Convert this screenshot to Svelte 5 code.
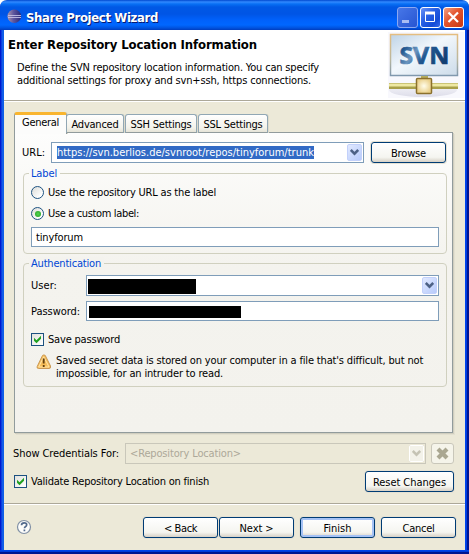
<script>
  let location = $state('https://svn.berlios.de/svnroot/repos/tinyforum/trunk');
  const tabs = [
    { name: 'Advanced', width: 47, box: 58 },
    { name: 'SSH Settings', width: 61, box: 72 },
    { name: 'SSL Settings', width: 59, box: 70 }
  ];

  // Tracks a label so that it occupies its designed width.
  function fit(node, width) {
    const natural = node.getBoundingClientRect().width;
    node.style.letterSpacing = (width - natural) / node.textContent.length + 'px';
  }
</script>

{#snippet t(text, width)}<span class="t" use:fit={width}>{text}</span>{/snippet}

{#snippet arrow(disabled)}
  <span class="drop" class:disabled>
    <svg width="9" height="7" viewBox="0 0 9 7"><path d="M.8 1 4.500 4.700 8.200 1" fill="none" stroke={disabled ? '#c5c3b4' : '#4d6185'} stroke-width="2.500" /></svg>
  </span>
{/snippet}

{#snippet check()}
  <span class="check"><svg width="11" height="11" viewBox="0 0 11 11"><path d="M2 3.800v3L4.500 9.200 9 4.800v-3L4.500 6.200Z" fill="#21a121" /></svg></span>
{/snippet}

<div class="window">
  <header class="titlebar">
    <svg class="eclipse" width="15" height="15" viewBox="0 0 15 15">
      <defs><linearGradient id="orb" x2="1" y2="0"><stop stop-color="#a995ae" /><stop offset=".45" stop-color="#5d559d" /><stop offset="1" stop-color="#292978" /></linearGradient></defs>
      <circle cx="7.300" cy="7.300" r="6.800" fill="url(#orb)" />
      <path d="M1 6.500h13M1 8.500h13" stroke="#c3c0e4" stroke-width=".9" />
    </svg>
    <h1>{@render t('Share Project Wizard', 132)}</h1>
    <div class="controls">
      <span class="ctl dim"><svg width="19" height="19"><path d="M4 13.500h7" stroke="#a9bdf3" stroke-width="3" /></svg></span>
      <span class="ctl"><svg width="19" height="19"><path d="M4.500 5.500h9v8h-9z" fill="none" stroke="#fff" /><path d="M4 5h10" stroke="#fff" stroke-width="3" /></svg></span>
      <span class="ctl close"><svg width="19" height="19"><path d="m4.500 4.500 9.500 9.500m0-9.500-9.500 9.500" stroke="#fff" stroke-width="2.200" /></svg></span>
    </div>
  </header>

  <section class="banner">
    <div class="intro">
      <h2>{@render t('Enter Repository Location Information', 249)}</h2>
      <p>{@render t('Define the SVN repository location information. You can specify', 302)}<br />{@render t('additional settings for proxy and svn+ssh, https connections.', 294)}</p>
    </div>
    <svg class="svn" width="76" height="66" viewBox="0 0 76 66">
      <defs>
        <linearGradient id="sheet" x2="1" y2="1"><stop stop-color="#bed3e6" /><stop offset=".45" stop-color="#f2f7fc" /><stop offset="1" stop-color="#ccdbe9" /></linearGradient>
        <linearGradient id="frame" x2="0" y2="1"><stop stop-color="#e4bd80" /><stop offset=".6" stop-color="#bbb79d" /><stop offset="1" stop-color="#8098ae" /></linearGradient>
        <linearGradient id="ink" x2="1" y2=".5"><stop stop-color="#164377" /><stop offset=".2" stop-color="#225790" /><stop offset=".42" stop-color="#6b95bf" /><stop offset=".62" stop-color="#225790" /><stop offset="1" stop-color="#123e71" /></linearGradient>
        <radialGradient id="hub"><stop stop-color="#fffdeb" /><stop offset="1" stop-color="#ead08a" /></radialGradient>
        <linearGradient id="shade" x2="0" y2="1"><stop stop-color="#f8f8fc" /><stop offset="1" stop-color="#dddde9" /></linearGradient>
      </defs>
      <path d="M0 0h76v66H0z" fill="#f8f8fd" />
      <ellipse cx="35" cy="58" rx="34" ry="7" fill="url(#shade)" />
      <path d="M2.500 2.500h67v41h-67z" fill="url(#sheet)" stroke="url(#frame)" stroke-width="1.500" />
      <text transform="translate(11.500 32) scale(1.030 1)" fill="url(#ink)" stroke="url(#ink)" stroke-width=".7">SVN</text>
      <path d="M33 44h7v7h-7z" fill="#b6ad5d" />
      <path d="M1 51h69v6H1z" fill="#a9a04a" /><path d="M1 51.500h69v3H1z" fill="#eee8a2" />
      <rect x="28.500" y="46.500" width="15" height="15" rx="1" fill="url(#hub)" stroke="#8b702c" stroke-width="1.500" />
    </svg>
  </section>

  <main>
    <nav>
      <span class="tab active">{@render t('General', 37)}</span>
      {#each tabs as tab}
        <span class="tab" style:width="{tab.box}px">{@render t(tab.name, tab.width)}</span>
      {/each}
    </nav>
    <div class="panel">
      <div class="row url">
        <label for="url">{@render t('URL:', 23)}</label>
        <div class="field combo" id="url"><mark>{@render t(location, 257)}</mark>{@render arrow(false)}</div>
        <button class="wide">{@render t('Browse', 35)}</button>
      </div>

      <section class="group naming">
        <h3>{@render t('Label', 26)}</h3>
        <div class="option"><i class="radio"></i>{@render t('Use the repository URL as the label', 168)}</div>
        <div class="option second"><i class="radio on"></i>{@render t('Use a custom label:', 91)}</div>
        <div class="field custom">{@render t('tinyforum', 47)}</div>
      </section>

      <section class="group auth">
        <h3>{@render t('Authentication', 70)}</h3>
        <div class="row user"><span class="caption">{@render t('User:', 26)}</span><div class="field combo"><b class="mask name"></b>{@render arrow(false)}</div></div>
        <div class="row pass"><span class="caption">{@render t('Password:', 49)}</span><div class="field"><b class="mask secret"></b></div></div>
        <div class="option save">{@render check()}{@render t('Save password', 72)}</div>
        <div class="note">
          <svg width="16" height="16" viewBox="0 0 16 16"><path d="M7.500 1Q9 .6 9.500 2l5 10q.7 2.500-1.500 2.500H2.500Q.5 14.500 1.200 12.500L6 2.500Q6.500 1 7.500 1Z" fill="#f7bd58" stroke="#c99855" /><path d="M7.700 2.800 13 13H2.700Z" fill="none" stroke="#ffe6ad" /><path d="M7.700 4.500v5M7.700 11v2" stroke="#65400f" stroke-width="1.800" /></svg>
          <p>{@render t("Saved secret data is stored on your computer in a file that's difficult, but not", 367)}<br />{@render t('impossible, for an intruder to read.', 167)}</p>
        </div>
      </section>
    </div>

    <div class="row credentials">
      <span class="caption">{@render t('Show Credentials For:', 106)}</span>
      <div class="field combo off">{@render t('<Repository Location>', 111)}{@render arrow(true)}</div>
      <button class="remove" disabled aria-label="Remove"><svg width="13" height="13" viewBox="0 0 13 13"><path d="m2 2 9 9m0-9-9 9" stroke="#aaa791" stroke-width="4.200" /></svg></button>
    </div>
    <div class="row validate">
      <div class="option">{@render check()}{@render t('Validate Repository Location on finish', 178)}</div>
      <button class="reset">{@render t('Reset Changes', 73)}</button>
    </div>
  </main>

  <footer>
    <svg class="help" width="16" height="16" viewBox="0 0 16 16"><circle cx="8" cy="8" r="6.500" fill="#fdfdfb" stroke="#8190a5" stroke-width="1.200" /><path d="M5.500 6.300q0-2.500 2.700-2.500 2.500 0 2.500 2 0 1.200-1.300 2-.9.600-.9 1.500M8.400 10.600v1.700" fill="none" stroke="#536b8d" stroke-width="1.700" /></svg>
    <button class="wide back">{@render t('< Back', 33)}</button>
    <button class="wide next">{@render t('Next >', 34)}</button>
    <button class="wide default">{@render t('Finish', 28)}</button>
    <button class="wide cancel">{@render t('Cancel', 32)}</button>
  </footer>
</div>

<style>
  :global(body) { margin: 0; background: #fff; overflow: hidden; }
  * { box-sizing: border-box; }
  h1, h2, h3, p { margin: 0; font: inherit; }
  svg { display: block; flex: none; }
  .window {
    width: 469px; height: 554px; display: flex; flex-direction: column;
    font: 11px/13px "DejaVu Sans Condensed", "DejaVu Sans", sans-serif; color: #000;
    background: linear-gradient(90deg, #0019cf 0, #0019cf 1px, #0831d9 1px, #166aee 3px, #0855dd 4px, #ece9d8 4px, #ece9d8 465px, #0048f1 465px, #003bda 467px, #001590 467px);
    border-radius: 7px 7px 0 0; overflow: hidden; white-space: nowrap;
  }
  .t { display: inline-block; white-space: pre; }
  .titlebar {
    height: 30px; flex: none; display: flex; align-items: center; padding: 0 5px 0 7px;
    background: linear-gradient(#0048cf 0, #3189ff 2px, #0870f4 4px, #0058e5 7px, #0055e5 14px, #0061fb 20px, #0067ff 25px, #0052de 28px, #003dbe 30px);
  }
  .eclipse { margin-top: 2px; }
  h1 { margin: 5px 0 0 4px; color: #fff; font: bold 13px/16px "DejaVu Sans Condensed", sans-serif; text-shadow: 1px 1px 0 #071a70; }
  .controls { display: flex; gap: 2px; margin: 4px 0 0 auto; }
  .ctl { width: 21px; height: 21px; border: 1px solid #fff; border-radius: 3px; background: linear-gradient(135deg, #6b93f6, #2860e5 40%, #134bd7 75%, #376bed); }
  .dim { border-color: #8ca8f2; background: linear-gradient(135deg, #4777e8, #2755d2); }
  .close { background: linear-gradient(135deg, #f1a184, #e3532d 45%, #c73811); }
  .banner { height: 72px; flex: none; margin: 0 4px; display: flex; justify-content: space-between; background: linear-gradient(#fff 70px, #aca899 70px, #aca899 71px, #fff 71px); padding: 2px 1px 0 4px; }
  h2 { margin-top: 5px; font: bold 13px/16px "DejaVu Sans Condensed", sans-serif; }
  .intro p { margin: 8px 0 0 9px; }
  .svn text { font: bold 24px "Open Sans", sans-serif; letter-spacing: 0; }

  main { flex: 1; padding: 10px 15px 0 14px; }
  main { padding-right: 11px; }
  nav { height: 21px; display: flex; align-items: flex-end; position: relative; }
  .tab { height: 19px; display: flex; justify-content: center; padding-top: 3px; margin-right: 1px; border: 1px solid #91a7b4; border-bottom-color: #919b9c; border-radius: 3px 3px 0 0; background: linear-gradient(#fff, #f3f2ea 75%, #e5e3d7); box-shadow: 1px 0 #dddacb; }
  .active { width: 53px; height: 22px; margin: 0 -1px -1px 0; padding-top: 1px; background: #fcfcfb; border: 1px solid #919b9c; border-top: 3px solid #f9b52f; border-bottom: 0; }
  .panel { width: 439px; height: 301px; margin-top: -1px; padding: 9px 6px 0 8px; border: 1px solid #919b9c; background: linear-gradient(#fdfdfc, #f4f3ee 45%, #f3f2ed); box-shadow: 1px 1px #d0cebf, 2px 2px #e3e0d0; }
  .row { display: flex; align-items: center; }
  .url { height: 21px; }
  .url label { width: 28px; margin-left: -1px; }
  .url .combo { width: 314px; margin-left: 1px; padding-left: 5px; }
  mark { height: 13px; background: #316ac5; color: #fff; line-height: 13px; margin-top: -1px; }
  .url button { margin-left: 7px; }
  .field { border: 1px solid #7f9db9; background: #fff; display: flex; align-items: center; height: 20px; }
  .combo { height: 21px; padding-right: 1px; }
  .drop { width: 15px; height: 17px; margin-left: auto; display: flex; align-items: center; justify-content: center; border-radius: 2px; border: 1px solid #c3d1fb; background: linear-gradient(135deg, #e1e9ff, #b8cbfb); }
  .drop.disabled { border-color: #e8e6dc; outline: 1px solid #fff; outline-offset: -1px; background: #f3f2e9; }
  button { height: 21px; padding: 0 0 1px; border: 1px solid #003c74; border-radius: 3px; background: linear-gradient(#fff, #f5f5f0 75%, #d6d0c5); box-shadow: 0 0 0 1px #e5e1d3; font: inherit; color: #000; flex: none; display: flex; align-items: center; justify-content: center; }
  .wide { width: 75px; }
  .wide .t, .reset .t { margin-top: 2px; }
  .group { position: relative; width: 424px; border: 1px solid #d0d0bf; border-radius: 4px; }
  .group h3 { position: absolute; top: -7px; left: 5px; padding: 0 3px 0 2px; color: #0046d5; background: #fafaf8; }
  .auth h3 { background: #f4f3ee; }
  .naming { height: 81px; margin-top: 10px; padding: 12px 7px 0; }
  .option { height: 13px; display: flex; align-items: center; gap: 4px; }
  .second { margin-top: 8px; }
  .radio { width: 13px; height: 13px; border: 1px solid #1d5281; border-radius: 50%; background: linear-gradient(135deg, #dcdcd7, #fff 80%); display: flex; align-items: center; justify-content: center; }
  .on::after { content: ''; width: 6px; height: 6px; border-radius: 50%; background: radial-gradient(#54d551, #219b20); }
  .custom { width: 408px; margin-top: 7px; padding-left: 4px; }
  .auth { height: 124px; margin-top: 9px; padding: 11px 7px 0; }
  .auth .caption { width: 55px; }
  .auth .field { width: 353px; }
  .pass { margin-top: 5px; }
  .mask { display: block; background: #000; }
  .name { width: 108px; height: 15px; margin: 1px 0 0 1px; }
  .secret { width: 152px; height: 12px; margin: 1px 0 0 2px; }
  .save { margin-top: 12px; }
  .check { width: 13px; height: 13px; border: 1px solid #1c5180; background: linear-gradient(135deg, #e2e2dd, #fff); }
  .note { display: flex; margin: 8px 0 0 5px; }
  .note p { margin-left: 4px; }
  .credentials { margin-top: 10px; height: 21px; }
  .credentials .caption { width: 111px; margin-left: -1px; }
  .credentials .combo { width: 301px; margin-left: 1px; padding-left: 4px; }
  .off { background: #ece9d8; border-color: #c9c7ba; color: #aca899; }
  .remove { width: 23px; margin-left: 5px; border-color: #c9c7ba; background: #f5f4ea; box-shadow: none; }
  .validate { height: 21px; margin-top: 7px; justify-content: space-between; width: 440px; }
  .validate .option { margin-top: -1px; }
  .reset { width: 89px; }
  footer { height: 51px; flex: none; padding: 15px 13px 0 16px; display: flex; align-items: flex-start; background: linear-gradient(transparent 47px, #0048f1 47px, #0036d0 49px, #001590 49px), linear-gradient(#aca899 1px, #fff 1px, #fff 2px, transparent 2px) 4px 0 / 461px 100% no-repeat; }
  .help { margin-top: 1px; }
  footer button { margin-top: -1px; }
  .back { margin-left: 111px; }
  .next { margin-left: 1px; }
  .default { margin-left: 6px; box-shadow: inset 0 0 0 2px #a5c2f5, 0 0 0 1px #e5e1d3; }
  .cancel { margin-left: 6px; }
</style>
